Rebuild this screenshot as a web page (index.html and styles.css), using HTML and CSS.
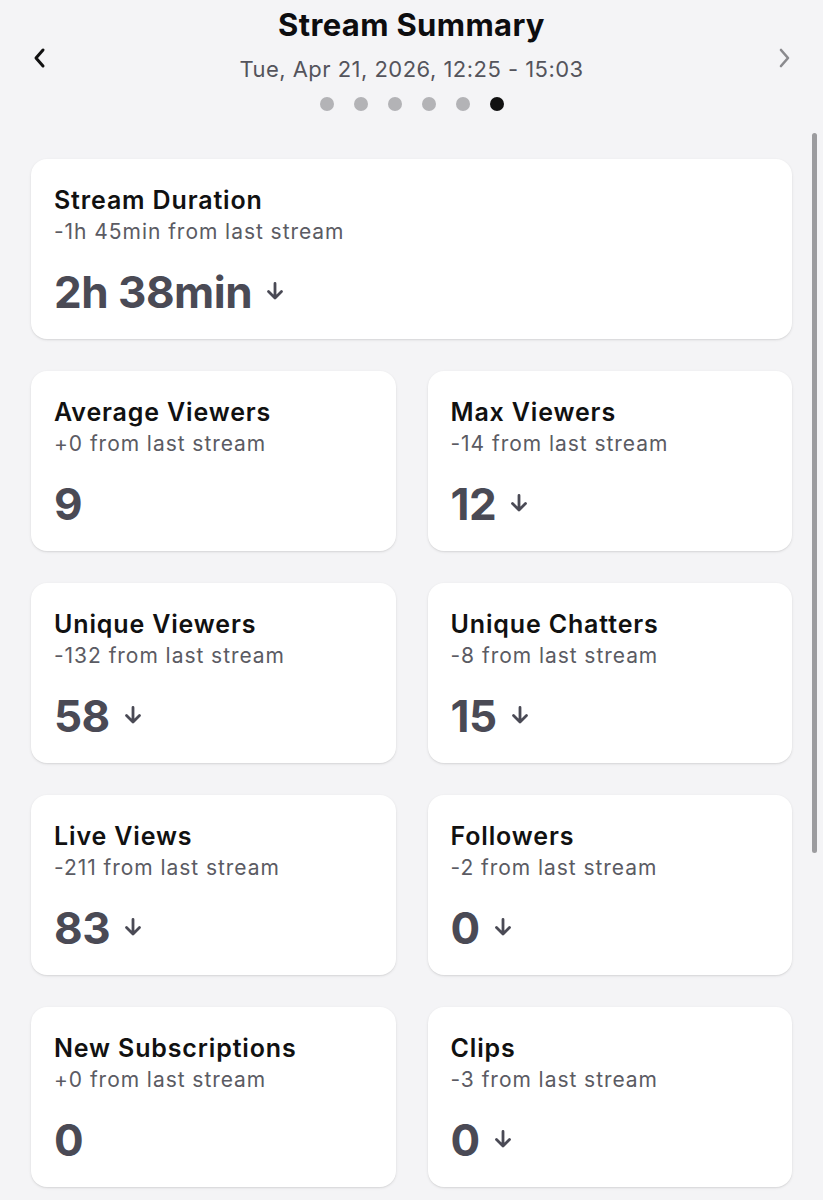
FILE: index.html
```html
<!DOCTYPE html>
<html lang="en">
<head>
<meta charset="utf-8">
<title>Stream Summary</title>
<link rel="stylesheet" href="styles.css">
</head>
<body>
<div class="page">
  <header class="header">
    <button class="nav nav-prev" aria-label="Previous">
      <svg width="14" height="22" viewBox="0 0 14 22"><path d="M11 3 L4 11 L11 19" fill="none" stroke="#111" stroke-width="3" stroke-linecap="round" stroke-linejoin="round"/></svg>
    </button>
    <div class="header-center">
      <h1 class="title">Stream Summary</h1>
      <div class="date">Tue, Apr 21, 2026, 12:25 - 15:03</div>
      <div class="dots">
        <span class="dot"></span><span class="dot"></span><span class="dot"></span><span class="dot"></span><span class="dot"></span><span class="dot active"></span>
      </div>
    </div>
    <button class="nav nav-next" aria-label="Next">
      <svg width="14" height="22" viewBox="0 0 14 22"><path d="M4 3 L11 11 L4 19" fill="none" stroke="#8a8a8e" stroke-width="2.6" stroke-linecap="round" stroke-linejoin="round"/></svg>
    </button>
  </header>

  <main class="cards">
    <section class="card card-wide">
      <div class="card-title">Stream Duration</div>
      <div class="card-sub">-1h 45min from last stream</div>
      <div class="card-value">2h 38min<svg class="arrow" width="18" height="18" viewBox="0 0 18 18"><path d="M9 1.5 V16 M2.5 9.5 L9 16 L15.5 9.5" fill="none" stroke="currentColor" stroke-width="2.8" stroke-linecap="round" stroke-linejoin="round"/></svg></div>
    </section>

    <section class="card">
      <div class="card-title">Average Viewers</div>
      <div class="card-sub">+0 from last stream</div>
      <div class="card-value">9</div>
    </section>
    <section class="card">
      <div class="card-title">Max Viewers</div>
      <div class="card-sub">-14 from last stream</div>
      <div class="card-value">12<svg class="arrow" width="18" height="18" viewBox="0 0 18 18"><path d="M9 1.5 V16 M2.5 9.5 L9 16 L15.5 9.5" fill="none" stroke="currentColor" stroke-width="2.8" stroke-linecap="round" stroke-linejoin="round"/></svg></div>
    </section>

    <section class="card">
      <div class="card-title">Unique Viewers</div>
      <div class="card-sub">-132 from last stream</div>
      <div class="card-value">58<svg class="arrow" width="18" height="18" viewBox="0 0 18 18"><path d="M9 1.5 V16 M2.5 9.5 L9 16 L15.5 9.5" fill="none" stroke="currentColor" stroke-width="2.8" stroke-linecap="round" stroke-linejoin="round"/></svg></div>
    </section>
    <section class="card">
      <div class="card-title">Unique Chatters</div>
      <div class="card-sub">-8 from last stream</div>
      <div class="card-value">15<svg class="arrow" width="18" height="18" viewBox="0 0 18 18"><path d="M9 1.5 V16 M2.5 9.5 L9 16 L15.5 9.5" fill="none" stroke="currentColor" stroke-width="2.8" stroke-linecap="round" stroke-linejoin="round"/></svg></div>
    </section>

    <section class="card">
      <div class="card-title">Live Views</div>
      <div class="card-sub">-211 from last stream</div>
      <div class="card-value">83<svg class="arrow" width="18" height="18" viewBox="0 0 18 18"><path d="M9 1.5 V16 M2.5 9.5 L9 16 L15.5 9.5" fill="none" stroke="currentColor" stroke-width="2.8" stroke-linecap="round" stroke-linejoin="round"/></svg></div>
    </section>
    <section class="card">
      <div class="card-title">Followers</div>
      <div class="card-sub">-2 from last stream</div>
      <div class="card-value">0<svg class="arrow" width="18" height="18" viewBox="0 0 18 18"><path d="M9 1.5 V16 M2.5 9.5 L9 16 L15.5 9.5" fill="none" stroke="currentColor" stroke-width="2.8" stroke-linecap="round" stroke-linejoin="round"/></svg></div>
    </section>

    <section class="card">
      <div class="card-title">New Subscriptions</div>
      <div class="card-sub">+0 from last stream</div>
      <div class="card-value">0</div>
    </section>
    <section class="card">
      <div class="card-title">Clips</div>
      <div class="card-sub">-3 from last stream</div>
      <div class="card-value">0<svg class="arrow" width="18" height="18" viewBox="0 0 18 18"><path d="M9 1.5 V16 M2.5 9.5 L9 16 L15.5 9.5" fill="none" stroke="currentColor" stroke-width="2.8" stroke-linecap="round" stroke-linejoin="round"/></svg></div>
    </section>
  </main>

  <div class="scrollbar"></div>
</div>
</body>
</html>
```

FILE: styles.css
```css
html, body {
  margin: 0;
  padding: 0;
  background: #f4f4f6;
}

body {
  font-family: "Inter", "Noto Sans", "Liberation Sans", sans-serif;
  color: #111;
  height: 1200px;
  overflow: hidden;
}

.page {
  position: relative;
  min-height: 1200px;
}

.header {
  display: flex;
  align-items: center;
  padding: 6px 27px 0;
}

.nav {
  width: 24px;
  height: 30px;
  padding: 0;
  border: 0;
  background: none;
  display: flex;
  align-items: center;
  justify-content: center;
  margin-bottom: 2px;
}

.header-center {
  flex: 1;
  display: flex;
  flex-direction: column;
  align-items: center;
}

.title {
  margin: 0;
  font-size: 31px;
  line-height: 38px;
  font-weight: 700;
  letter-spacing: 0.35px;
  color: #0d0d0f;
}

.date {
  margin-top: 11px;
  font-size: 22px;
  line-height: 28px;
  color: #54545c;
  letter-spacing: 0.47px;
}

.dots {
  margin-top: 14px;
  display: flex;
  gap: 20px;
}

.dot {
  width: 14px;
  height: 14px;
  border-radius: 50%;
  background: #b3b3b6;
}

.dot.active {
  background: #111;
}

.cards {
  margin-top: 48px;
  padding: 0 31px;
  display: grid;
  grid-template-columns: 1fr 1fr;
  gap: 32px;
}

.card {
  background: #fff;
  border-radius: 16px;
  box-shadow: 0 1px 3px rgba(0, 0, 0, 0.10), 0 1px 1px rgba(0, 0, 0, 0.04);
  padding: 25px 23px 21px;
  height: 180px;
  box-sizing: border-box;
}

.card-wide {
  grid-column: 1 / -1;
}

.card-title {
  font-size: 25px;
  line-height: 32px;
  font-weight: 600;
  letter-spacing: 0.85px;
  color: #111;
}

.card-sub {
  margin-top: 2px;
  font-size: 21px;
  line-height: 28px;
  letter-spacing: 0.95px;
  color: #5b5b63;
}

.card-value {
  margin-top: 20px;
  font-size: 44px;
  line-height: 52px;
  font-weight: 700;
  color: #4a4a55;
  display: flex;
  align-items: center;
  letter-spacing: -0.5px;
}

.arrow {
  margin-left: 14px;
  margin-top: -3px;
  color: #4a4a55;
}

.scrollbar {
  position: absolute;
  top: 133px;
  left: 812px;
  width: 5px;
  height: 720px;
  border-radius: 3px;
  background: #9c9c9f;
}
```
